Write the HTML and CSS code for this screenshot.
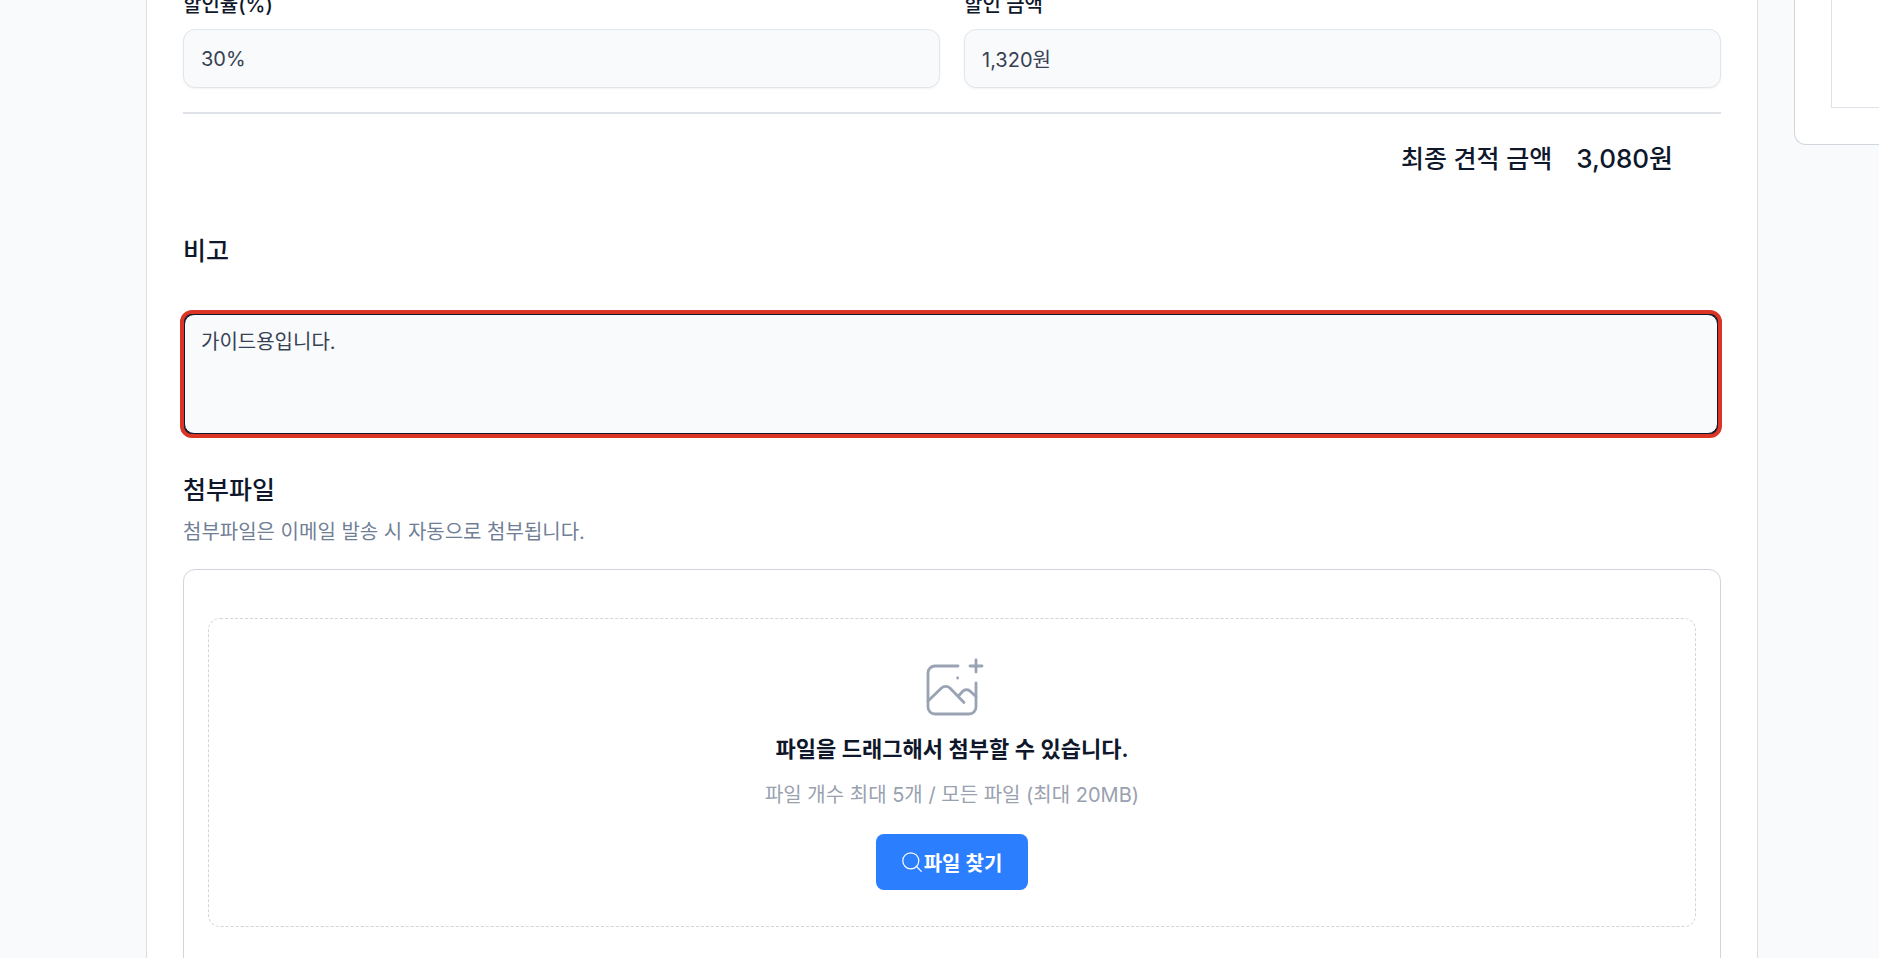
FILE: index.html
```html
<!DOCTYPE html>
<html lang="ko">
<head>
  <meta charset="UTF-8" />
  <meta name="viewport" content="width=device-width, initial-scale=1.0"/>
  <title>견적서</title>
  <link rel="stylesheet" href="styles.css">
</head>
<body>
  <div class="page">
    <main class="card">
      <div class="discount">
        <div class="field">
          <label for="rate">할인율(%)</label>
          <input type="text" id="rate" value="30%" readonly>
        </div>
        <div class="field">
          <label for="amount">할인 금액</label>
          <input type="text" id="amount" value="1,320원" readonly>
        </div>
      </div>

      <div class="total">
        <span>최종 견적 금액</span>
        <span class="total-amount">3,080원</span>
      </div>

      <section class="note">
        <h2><label for="note">비고</label></h2>
        <div class="note-box">
          <textarea id="note">가이드용입니다.</textarea>
        </div>
      </section>

      <section class="files">
        <h2>첨부파일</h2>
        <p class="desc">첨부파일은 이메일 발송 시 자동으로 첨부됩니다.</p>
        <div class="upload">
          <div class="dropzone">
            <svg class="image-icon" viewBox="0 0 64 64" fill="none" stroke="currentColor" stroke-width="2.8" stroke-linecap="round" stroke-linejoin="round" aria-hidden="true">
              <path d="M38 11H15a7 7 0 0 0-7 7v34a7 7 0 0 0 7 7h34a7 7 0 0 0 7-7V28"/>
              <path d="M56 5v12M50 11h12"/>
              <path d="M37.6 23h.1"/>
              <path d="M8 46 21.500 33a6 6 0 0 1 8.400 0L44 47.500"/>
              <path d="M38.500 41l4-4.500a5.500 5.500 0 0 1 8 0L56 41.500"/>
            </svg>
            <p class="drop-title">파일을 드래그해서 첨부할 수 있습니다.</p>
            <p class="drop-info">파일 개수 최대 5개 / 모든 파일 (최대 20MB)</p>
            <button type="button" class="find">
              <svg class="search-icon" viewBox="0 0 20 20" fill="none" stroke="currentColor" stroke-width="1.2" stroke-linecap="round" aria-hidden="true">
                <circle cx="8.800" cy="8.800" r="8"/>
                <path d="M14.500 14.500l4.800 4.800"/>
              </svg>
              <span>파일 찾기</span>
            </button>
          </div>
        </div>
      </section>
    </main>

    <aside class="side">
      <div class="preview"></div>
    </aside>
  </div>
</body>
</html>
```
FILE: styles.css
```css
* {
  box-sizing: border-box;
}

body {
  margin: 0;
  height: 100vh;
  overflow: hidden;
  background: #f9fafc;
  color: #0f172b;
  font-family: Inter, "Noto Sans CJK KR", sans-serif;
  font-size: 20px;
}

h2, p {
  margin: 0;
}

.page {
  display: grid;
  grid-template-columns: 1fr 85px;
  gap: 36px;
  min-height: 100vh;
  padding-left: 146px;
}

.card {
  padding: 0 36px;
  background: #fff;
  border: solid #d9dde3;
  border-width: 0 1px;
}

.discount {
  display: grid;
  grid-template-columns: 1fr 1fr;
  gap: 24px;
  /* scrolled: the labels are cut by the top of the window */
  margin-top: -7px;
  padding-bottom: 24px;
  border-bottom: 2px solid #dfe3e8;
}

.field label {
  display: block;
  margin-bottom: 12px;
  line-height: 24px;
  font-weight: 500;
}

input, textarea {
  display: block;
  width: 100%;
  margin: 0;
  background: #f9fafb;
  color: #364153;
  font: inherit;
  outline: none;
}

input {
  height: 59px;
  padding: 0 17px;
  border: 1px solid #e2e5ea;
  border-radius: 12px;
  box-shadow: 0 1px 2px rgba(0, 0, 0, 0.05);
}

.total {
  display: flex;
  justify-content: flex-end;
  gap: 24px;
  padding: 25px 48px 0 0;
  font-size: 25px;
  line-height: 40px;
  font-weight: 500;
}

.total-amount {
  font-size: 26px;
}

h2 {
  font-size: 25px;
  line-height: 36px;
  font-weight: 500;
}

.note {
  margin-top: 54px;
}

.note-box {
  margin: 41px -1px 0 -3px;
  border: 4px solid #db3526;
  border-radius: 12px;
  background: #0f172b;
}

textarea {
  height: 120px;
  padding: 12px 16px;
  border: 1px solid #0f172b;
  border-radius: 10px;
  line-height: 30px;
  resize: none;
}

.files {
  margin-top: 34px;
}

.desc {
  margin-top: 10px;
  line-height: 28px;
  color: #717f96;
}

.upload {
  margin-top: 23px;
  padding: 48px 24px;
  border: 1px solid #d1d5dc;
  border-radius: 12px;
}

.dropzone {
  display: flex;
  flex-direction: column;
  align-items: center;
  padding: 36px 24px;
  border: 1px dashed #d1d5dc;
  border-radius: 12px;
}

.image-icon {
  width: 64px;
  height: 64px;
  color: #99a3b3;
}

.drop-title {
  margin-top: 14px;
  font-size: 22px;
  line-height: 32px;
  font-weight: 600;
}

.drop-info {
  margin-top: 16px;
  line-height: 28px;
  color: #99a1af;
}

.find {
  display: flex;
  align-items: center;
  gap: 2px;
  height: 56px;
  margin-top: 25px;
  padding: 0 26px;
  border: 0;
  border-radius: 8px;
  background: #2b7fff;
  color: #fff;
  font: inherit;
  font-weight: 600;
}

.search-icon {
  width: 20px;
  height: 20px;
}

.side {
  align-self: start;
  height: 145px;
  padding: 0 0 36px 36px;
  background: #fff;
  border: solid #d1d5dc;
  border-width: 0 0 1px 1px;
  border-radius: 0 0 0 12px;
}

.preview {
  height: 108px;
  border: solid #dfe2e9;
  border-width: 0 0 1px 1px;
}
```
